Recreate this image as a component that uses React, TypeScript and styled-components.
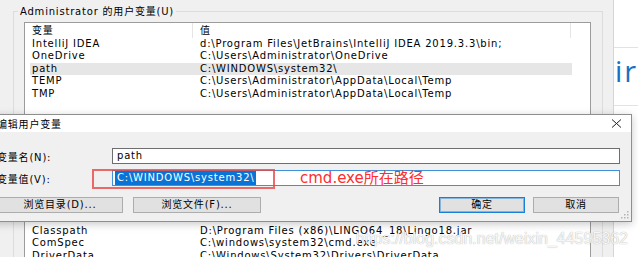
import React from "react";
import styled, { createGlobalStyle } from "styled-components";

const UI_FONT = `"DejaVu Sans", "Noto Sans CJK SC", sans-serif`;

const GlobalStyle = createGlobalStyle`
  html, body { margin: 0; padding: 0; background: #fff; }
  body { font-family: ${UI_FONT}; }
`;

const S = {
  Desktop: styled.div`
    position: relative;
    display: flex;
    width: 638px;
    height: 257px;
    overflow: hidden;
    background: #fff;
    font-family: ${UI_FONT};
    font-size: 10px;
    letter-spacing: 0.8px;
    color: #000;
  `,
  EnvWindow: styled.div`
    flex: 0 0 614px;
    box-sizing: border-box;
    height: 100%;
    padding: 11px 10px 0 13px;
    background: #f0f0f0;
    border-right: 1px solid #d6d6d6;
  `,
  GroupBox: styled.div<{ $height: number; $gap?: number }>`
    box-sizing: border-box;
    height: ${(p) => p.$height}px;
    margin-top: ${(p) => p.$gap ?? 0}px;
    padding: 0 11px 0 10px;
    border: 1px solid #dcdcdc;
  `,
  Legend: styled.div`
    width: fit-content;
    margin: -7.5px 0 0 -6px;
    padding: 0 2px;
    line-height: 14px;
    background: #f0f0f0;
  `,
  List: styled.div<{ $height: number }>`
    box-sizing: border-box;
    height: ${(p) => p.$height}px;
    margin-top: 3.5px;
    border: 1px solid #9c9c9c;
    background: #fff;
    overflow: hidden;
  `,
  Header: styled.div`
    display: flex;
    height: 15px;
    line-height: 15px;
  `,
  HeaderCell: styled.div<{ $width: number }>`
    box-sizing: border-box;
    width: ${(p) => p.$width}px;
    padding-left: 7px;
    border-right: 1px solid #e5e5e5;
  `,
  Row: styled.div<{ $selected?: boolean }>`
    display: flex;
    width: 542px;
    height: 12.4px;
    margin-left: 5px;
    line-height: 12.4px;
    white-space: nowrap;
    background: ${(p) => (p.$selected ? "#e6e6e6" : "transparent")};
  `,
  NameCell: styled.div`
    flex: 0 0 170px;
    box-sizing: border-box;
    padding-left: 2px;
    overflow: hidden;
  `,
  ValueCell: styled.div`
    flex: 1;
    overflow: hidden;
  `,
  Spacer: styled.div<{ $height: number }>`
    height: ${(p) => p.$height}px;
  `,
  SidePanel: styled.div`
    flex: 1;
    overflow: hidden;
    background: #fff;
  `,
  Divider: styled.div<{ $gap: number }>`
    margin-top: ${(p) => p.$gap}px;
    height: 1px;
    background: #e2e2e2;
  `,
  PageHeading: styled.div`
    margin-top: 8px;
    padding-left: 1px;
    font-family: "Open Sans", sans-serif;
    font-size: 29px;
    line-height: 30px;
    letter-spacing: 2px;
    color: #1a6fc4;
    white-space: nowrap;
  `,
  Dialog: styled.div`
    position: absolute;
    left: -8px;
    top: 114px;
    width: 640px;
    box-sizing: border-box;
    border: 1px solid #8e8e8e;
    background: #f0f0f0;
    box-shadow: 0 2px 8px rgba(0, 0, 0, 0.22);
  `,
  TitleBar: styled.div`
    display: flex;
    align-items: center;
    justify-content: space-between;
    height: 17px;
    padding: 0 9px 0 4px;
    background: #fff;
  `,
  Close: styled.svg`
    display: block;
  `,
  Body: styled.div`
    padding: 16px 11px 8px 4px;
  `,
  Form: styled.div`
    display: grid;
    grid-template-columns: 115px 1fr;
    row-gap: 6px;
    align-items: center;
  `,
  Field: styled.div<{ $focused?: boolean }>`
    box-sizing: border-box;
    height: 16px;
    padding: 0 4px;
    line-height: 14px;
    white-space: nowrap;
    background: #fff;
    border: 1px solid ${(p) => (p.$focused ? "#3f8fdb" : "#6e6e6e")};
  `,
  Selected: styled.span`
    display: inline-block;
    margin-left: -2px;
    padding: 0 2px;
    background: #0a74d6;
    color: #fff;
  `,
  ButtonRow: styled.div`
    display: flex;
    margin-top: 11px;
    padding-right: 1px;
  `,
  ButtonGroup: styled.div<{ $gap: number; $right?: boolean }>`
    display: flex;
    gap: ${(p) => p.$gap}px;
    margin-left: ${(p) => (p.$right ? "auto" : "0")};
  `,
  Button: styled.div<{ $width: number; $default?: boolean }>`
    box-sizing: border-box;
    width: ${(p) => p.$width}px;
    height: 16px;
    line-height: 14px;
    text-align: center;
    background: #e1e1e1;
    border: 1px solid ${(p) => (p.$default ? "#1a7fd9" : "#adadad")};
    box-shadow: ${(p) => (p.$default ? "inset 0 0 0 1px rgba(26,127,217,0.45)" : "none")};
  `,
  Grip: styled.svg`
    position: absolute;
    right: 2px;
    bottom: 2px;
  `,
  Mark: styled.div`
    position: absolute;
    left: 99px;
    top: 54px;
    width: 183px;
    height: 20px;
    box-sizing: border-box;
    border: 2px solid rgba(232, 70, 70, 0.8);
  `,
  MarkNote: styled.div`
    position: absolute;
    left: 307px;
    top: 54px;
    font-size: 15px;
    line-height: 18px;
    letter-spacing: 0;
    color: #ff2d2d;
    white-space: nowrap;
  `,
  Watermark: styled.div`
    position: absolute;
    right: 10px;
    top: 229px;
    font-family: "Liberation Sans", Arial, sans-serif;
    font-size: 16px;
    line-height: 20px;
    letter-spacing: 0;
    color: rgba(255, 255, 255, 0.92);
    text-shadow: 0 0 1px rgba(110, 110, 110, 0.7);
    white-space: nowrap;
  `,
};

const userVars: [string, string][] = [
  ["IntelliJ IDEA", "d:\\Program Files\\JetBrains\\IntelliJ IDEA 2019.3.3\\bin;"],
  ["OneDrive", "C:\\Users\\Administrator\\OneDrive"],
  ["path", "C:\\WINDOWS\\system32\\"],
  ["TEMP", "C:\\Users\\Administrator\\AppData\\Local\\Temp"],
  ["TMP", "C:\\Users\\Administrator\\AppData\\Local\\Temp"],
];

const systemVars: [string, string][] = [
  ["Classpath", "D:\\Program Files (x86)\\LINGO64_18\\Lingo18.jar"],
  ["ComSpec", "C:\\windows\\system32\\cmd.exe"],
  ["DriverData", "C:\\Windows\\System32\\Drivers\\DriverData"],
];

function VarList({ rows, height, skip = 0, selected }: { rows: [string, string][]; height: number; skip?: number; selected?: string }) {
  return (
    <S.List $height={height}>
      <S.Header>
        <S.HeaderCell $width={168}>变量</S.HeaderCell>
        <S.HeaderCell $width={378}>值</S.HeaderCell>
      </S.Header>
      {skip > 0 && <S.Spacer $height={skip} />}
      {rows.map(([name, value]) => (
        <S.Row key={name} $selected={name === selected}>
          <S.NameCell>{name}</S.NameCell>
          <S.ValueCell>{value}</S.ValueCell>
        </S.Row>
      ))}
    </S.List>
  );
}

export default function App() {
  return (
    <>
      <GlobalStyle />
      <S.Desktop>
        <S.EnvWindow>
          <S.GroupBox $height={119}>
            <S.Legend>Administrator 的用户变量(U)</S.Legend>
            <VarList rows={userVars} height={99} selected="path" />
          </S.GroupBox>
          <S.GroupBox $height={140} $gap={6}>
            <S.Legend>系统变量(S)</S.Legend>
            <VarList rows={systemVars} height={130} skip={62} />
          </S.GroupBox>
        </S.EnvWindow>

        <S.SidePanel>
          <S.Divider $gap={47} />
          <S.PageHeading>ir</S.PageHeading>
          <S.Divider $gap={19} />
        </S.SidePanel>

        <S.Dialog>
          <S.TitleBar>
            <span>编辑用户变量</span>
            <S.Close width="11" height="9" viewBox="0 0 11 9">
              <path d="M1 0.5 L10 8.5 M10 0.5 L1 8.5" stroke="#222" strokeWidth="1" fill="none" />
            </S.Close>
          </S.TitleBar>
          <S.Body>
            <S.Form>
              <span>变量名(N):</span>
              <S.Field>path</S.Field>
              <span>变量值(V):</span>
              <S.Field $focused>
                <S.Selected>C:\WINDOWS\system32\</S.Selected>
              </S.Field>
            </S.Form>
            <S.ButtonRow>
              <S.ButtonGroup $gap={10}>
                <S.Button $width={126}>浏览目录(D)...</S.Button>
                <S.Button $width={128}>浏览文件(F)...</S.Button>
              </S.ButtonGroup>
              <S.ButtonGroup $gap={8} $right>
                <S.Button $width={86} $default>确定</S.Button>
                <S.Button $width={86}>取消</S.Button>
              </S.ButtonGroup>
            </S.ButtonRow>
          </S.Body>
          <S.Mark />
          <S.MarkNote>cmd.exe所在路径</S.MarkNote>
          <S.Grip width="8" height="8" viewBox="0 0 8 8">
            <g fill="#b4b4b4">
              <rect x="6" y="0" width="1.5" height="1.5" />
              <rect x="3" y="3" width="1.5" height="1.5" />
              <rect x="6" y="3" width="1.5" height="1.5" />
              <rect x="0" y="6" width="1.5" height="1.5" />
              <rect x="3" y="6" width="1.5" height="1.5" />
              <rect x="6" y="6" width="1.5" height="1.5" />
            </g>
          </S.Grip>
        </S.Dialog>

        <S.Watermark>https://blog.csdn.net/weixin_44595362</S.Watermark>
      </S.Desktop>
    </>
  );
}
